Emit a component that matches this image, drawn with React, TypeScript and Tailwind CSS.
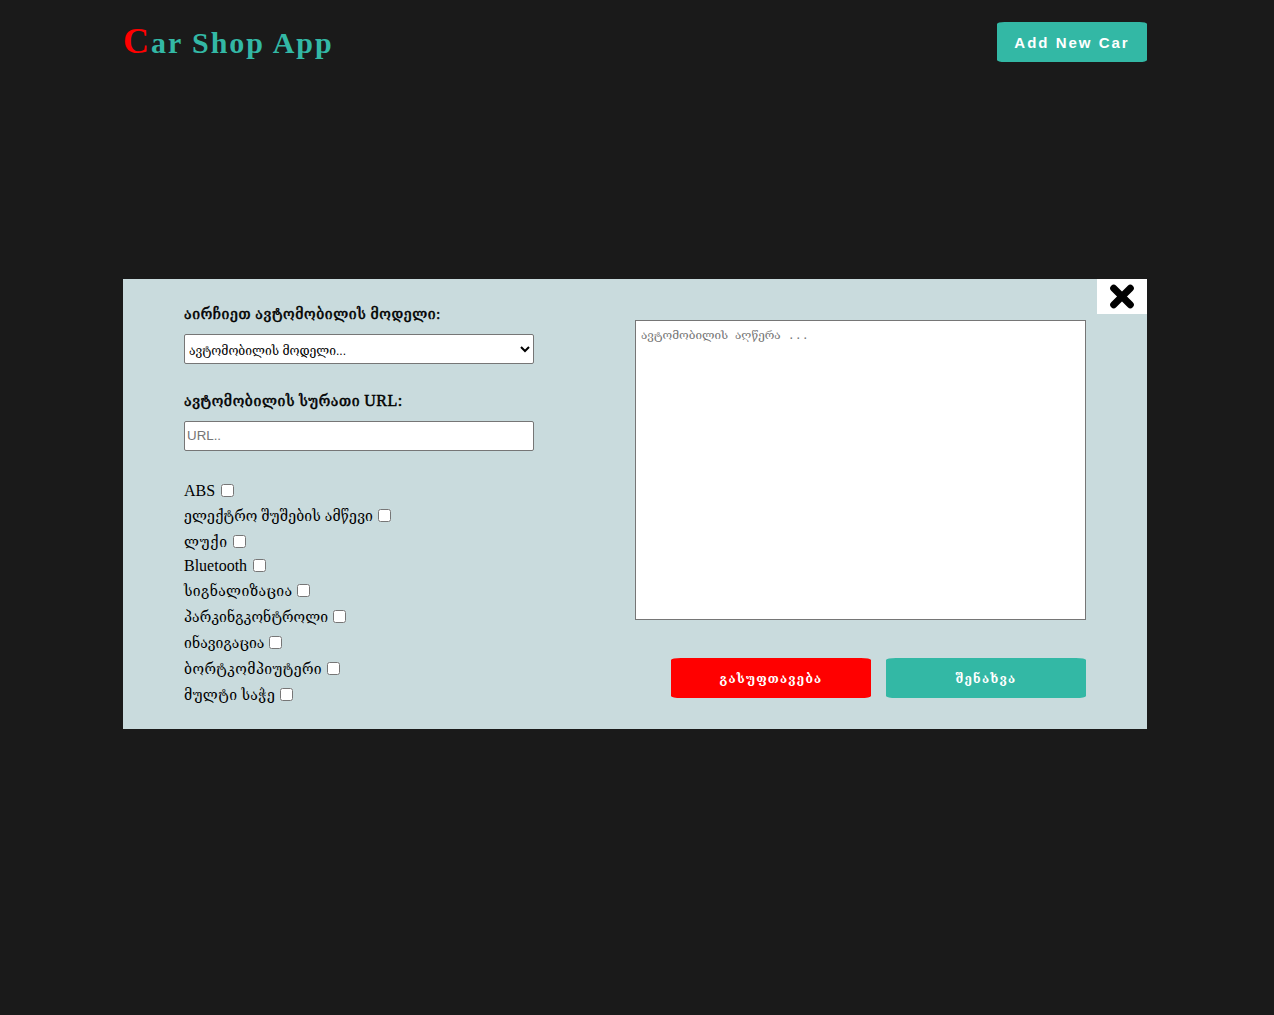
const options = [
  { name: 'ABS', row: 'h-[25px]', text: 'w-8 text-base', box: '' },
  { name: 'ელექტრო შუშების ამწევი', row: 'h-[26px]', text: 'w-[189px] pt-px text-[14px] tracking-[0.17px]', box: 'mb-[2px]' },
  { name: 'ლუქი', row: 'h-[25px]', text: 'w-[44px] pt-px text-[14px] tracking-[0.8px]', box: '' },
  { name: 'Bluetooth', row: 'h-[24px]', text: 'w-16 text-base', box: 'mb-[2px]' },
  { name: 'სიგნალიზაცია', row: 'h-[26px]', text: 'w-[108px] pt-px text-[14px] tracking-[0.35px]', box: 'mb-[2px]' },
  { name: 'პარკინგკონტროლი', row: 'h-[26px]', text: 'w-[144px] pt-px text-[14px] tracking-[0.1px]', box: 'mb-[2px]' },
  { name: 'ინავიგაცია', row: 'h-[26px]', text: 'w-[80px] pt-px text-[14px] tracking-[0.05px]', box: 'mb-[2px]' },
  { name: 'ბორტკომპიუტერი', row: 'h-[26px]', text: 'w-[138px] pt-px text-[14px] tracking-[0.42px]', box: 'mb-[2px]' },
  { name: 'მულტი საჭე', row: 'h-[26px]', text: 'w-[91px] pt-px text-[14px] tracking-[0.45px]', box: 'mb-[2px]' },
];

const button =
  "h-10 rounded-[5%] pt-[2px] text-white font-bold font-['Liberation_Sans','DejaVu_Serif',sans-serif]";

const fieldLabel =
  'flex h-[30px] items-start whitespace-pre text-[14px] leading-5 tracking-[0.62px] [-webkit-text-stroke:0.5px_black]';

export default function App() {
  return (
    <div className="min-h-screen bg-[#1a1a1a] pl-[123px] pr-[127px] font-['Liberation_Serif','DejaVu_Serif',serif] text-black">
      <header className="flex h-[84px] items-center justify-between">
        <h1 className="whitespace-nowrap text-[30px] font-bold leading-[40px] tracking-[1.95px] text-[#33b8a5]">
          <span className="text-[36px] text-[#ff0000]">C</span>ar Shop App
        </h1>
        <button className={`${button} w-[150px] bg-[#33b8a5] text-[15px] tracking-[2px]`}>Add New Car</button>
      </header>

      <main className="relative mt-[195px] flex h-[450px] bg-[#c9dbdd] px-[61px]">
        <form className="flex w-[451px] flex-col pt-[25px]">
          <label className={fieldLabel}>
            <span className="pt-px">აირჩიეთ ავტომობილის მოდელი:</span>
          </label>
          <select className="h-[30px] w-[350px] rounded-[2px] border border-[#767676] bg-white pt-[3px] font-['Liberation_Sans','DejaVu_Serif',sans-serif] text-[12.1px]">
            <option>ავტომობილის მოდელი...</option>
          </select>
          <label className={`${fieldLabel} mt-[27px]`}>
            <span className="pt-px">ავტომობილის სურათი </span>
            <span className="text-base leading-5 tracking-[0.5px]">URL:</span>
          </label>
          <input
            placeholder="URL.."
            className="h-[30px] w-[350px] rounded-[2px] border border-[#767676] bg-white px-[2px] pb-[2px] font-['Liberation_Sans',sans-serif] text-[13.333px] placeholder:text-[#757575]"
          />
          <div className="mt-[27px]">
            {options.map((o) => (
              <label key={o.name} className={`flex items-center whitespace-nowrap ${o.row}`}>
                <span className={o.text}>{o.name}</span>
                <input type="checkbox" className={`ml-[5px] size-[13px] ${o.box}`} />
              </label>
            ))}
          </div>
        </form>

        <section className="w-[451px] pt-[41px]">
          <textarea
            placeholder="ავტომობილის აღწერა ..."
            className="block h-[300px] w-[451px] resize-none border border-[#767676] bg-white px-[5px] py-[7px] font-['Liberation_Mono','DejaVu_Serif',monospace] text-[11.7px] placeholder:text-[#757575]"
          />
          <div className="mt-[38px] flex justify-end gap-[15px]">
            <button className={`${button} w-[200px] bg-[#ff0000] text-[12px] tracking-[1.2px]`}>გასუფთავება</button>
            <button className={`${button} w-[200px] bg-[#33b8a5] text-[12px] tracking-[1.2px]`}>შენახვა</button>
          </div>
        </section>

        <button aria-label="close" className="absolute right-0 top-0 flex h-[35px] w-[50px] items-center justify-center bg-white">
          <svg width="26" height="26" viewBox="0 0 26 26" stroke="#000" strokeWidth="7" strokeLinecap="round">
            <path d="M4.7 4.2 21.3 20.8M21.3 4.2 4.7 20.8" />
          </svg>
        </button>
      </main>
    </div>
  );
}
